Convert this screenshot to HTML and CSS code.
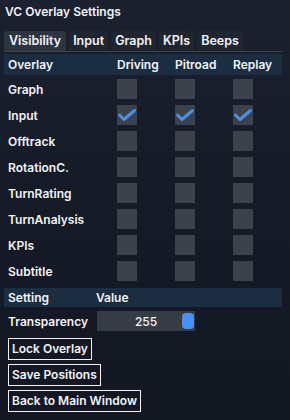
FILE: index.html
```html
<!DOCTYPE html>
<html>
<head>
<meta charset="utf-8">
<link rel="stylesheet" href="styles.css">
</head>
<body>
<div class="win">
  <div class="title">VC Overlay Settings</div>
  <div class="tabs">
    <div class="tab active">Visibility</div>
    <div class="tab">Input</div>
    <div class="tab">Graph</div>
    <div class="tab">KPIs</div>
    <div class="tab">Beeps</div>
  </div>
  <div class="grid vis">
    <div class="hd">Overlay</div><div class="hd">Driving</div><div class="hd">Pitroad</div><div class="hd">Replay</div>

    <div class="lbl">Graph</div><div class="c"><span class="cb"></span></div><div class="c"><span class="cb"></span></div><div class="c"><span class="cb"></span></div>
    <div class="lbl">Input</div>
    <div class="c"><span class="cb"><svg viewBox="0 0 20 20"><polyline points="2.5,10 7,14.5 17.5,5.5"/></svg></span></div>
    <div class="c"><span class="cb"><svg viewBox="0 0 20 20"><polyline points="2.5,10 7,14.5 17.5,5.5"/></svg></span></div>
    <div class="c"><span class="cb"><svg viewBox="0 0 20 20"><polyline points="2.5,10 7,14.5 17.5,5.5"/></svg></span></div>
    <div class="lbl">Offtrack</div><div class="c"><span class="cb"></span></div><div class="c"><span class="cb"></span></div><div class="c"><span class="cb"></span></div>
    <div class="lbl">RotationC.</div><div class="c"><span class="cb"></span></div><div class="c"><span class="cb"></span></div><div class="c"><span class="cb"></span></div>
    <div class="lbl">TurnRating</div><div class="c"><span class="cb"></span></div><div class="c"><span class="cb"></span></div><div class="c"><span class="cb"></span></div>
    <div class="lbl">TurnAnalysis</div><div class="c"><span class="cb"></span></div><div class="c"><span class="cb"></span></div><div class="c"><span class="cb"></span></div>
    <div class="lbl">KPIs</div><div class="c"><span class="cb"></span></div><div class="c"><span class="cb"></span></div><div class="c"><span class="cb"></span></div>
    <div class="lbl">Subtitle</div><div class="c"><span class="cb"></span></div><div class="c"><span class="cb"></span></div><div class="c"><span class="cb"></span></div>
  </div>
  <div class="grid set">
    <div class="hd">Setting</div><div class="hd">Value</div>
    <div class="lbl">Transparency</div>
    <div class="c"><div class="slider"><span class="val">255</span><span class="grab"></span></div></div>
  </div>
  <div class="buttons">
    <div class="btn">Lock Overlay</div>
    <div class="btn">Save Positions</div>
    <div class="btn">Back to Main Window</div>
  </div>
</div>
</body>
</html>
```
FILE: styles.css
```css
html, body {
  margin: 0;
  padding: 0;
  width: 290px;
  height: 420px;
  overflow: hidden;
}
body {
  background: linear-gradient(180deg, #1c2130 0%, #161b28 40%, #121722 100%);
  font-family: Inter, "Open Sans", sans-serif;
  font-weight: 600;
  font-size: 12px;
  color: #f2f3f5;
}
.win {
  display: flex;
  flex-direction: column;
  padding: 3px 8px 0 4px;
}
.title {
  height: 17px;
  line-height: 17px;
  padding-left: 1px;
  font-size: 12px;
}
.tabs {
  display: flex;
  gap: 3px;
  margin-top: 11px;
  border-bottom: 1px solid #3a4350;
  height: 20px;
  align-items: flex-end;
}
.tab {
  height: 20px;
  line-height: 20px;
  padding: 0 4px;
  font-size: 12.5px;
  background: #20262f;
  border-radius: 4px 4px 0 0;
}
.tab.active {
  background: #2d3640;
  padding: 0 5px;
}
.grid {
  display: grid;
}
.vis {
  grid-template-columns: 109px 58px 58px 53px;
  grid-auto-rows: 26px;
  grid-template-rows: 21px;
  margin-top: 2px;
}
.hd {
  background: #1b2d40;
  padding-left: 4px;
  line-height: 21px;
  height: 21px;
}
.lbl {
  padding-left: 4px;
  display: flex;
  align-items: center;
  padding-top: 2px;
}
.c {
  padding-left: 4px;
  display: flex;
  align-items: center;
  padding-top: 2px;
}
.cb {
  width: 20px;
  height: 20px;
  background: #3b424b;
  display: block;
}
.cb svg {
  width: 20px;
  height: 20px;
  display: block;
}
.cb polyline {
  fill: none;
  stroke: #4b8fe6;
  stroke-width: 3;
  stroke-linecap: round;
  stroke-linejoin: round;
}
.set {
  grid-template-columns: 88px 190px;
  grid-template-rows: 19px 26px;
  margin-top: 5px;
}
.set .hd {
  height: 19px;
  line-height: 19px;
}
.slider {
  margin-left: 1px;
  width: 98px;
  height: 20px;
  background: #363c44;
  position: relative;
  display: flex;
  align-items: center;
  justify-content: center;
}
.val {
  font-weight: 500;
}
.grab {
  position: absolute;
  right: 1px;
  top: 2px;
  width: 12px;
  height: 16px;
  border-radius: 4px;
  background: #4a8ff5;
}
.buttons {
  display: flex;
  flex-direction: column;
  align-items: flex-start;
  gap: 4px;
  margin-top: 5px;
  padding-left: 4px;
}
.btn {
  border: 1px solid #f2f3f5;
  height: 20px;
  line-height: 20px;
  padding: 0 3px;
}
```
